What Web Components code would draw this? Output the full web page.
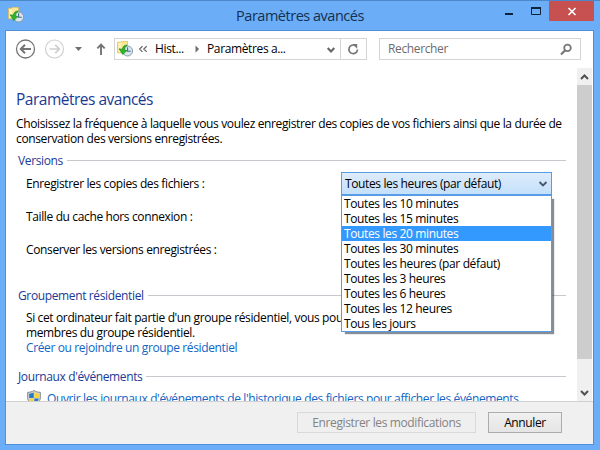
<!DOCTYPE html>
<html lang="fr">
<head>
<meta charset="utf-8">
<title>Paramètres avancés</title>
<style>
	body {
		margin: 0;
		width: 600px;
		height: 450px;
		overflow: hidden;
		font-family: 'Open Sans', 'Noto Sans', sans-serif;
		font-size: 12px;
		line-height: 15px;
		letter-spacing: -0.37px;
		color: #000;
	}
</style>
</head>
<body>
<settings-window></settings-window>

<script>
	class HistoryIcon extends HTMLElement {
		constructor() {
			super();
			this.attachShadow({ mode: "open" });
		}

		connectedCallback() {
			this.shadowRoot.innerHTML = `
				<style>
					:host { display: block; width: 16px; height: 16px; }
					svg { display: block; }
				</style>
				<svg width="16" height="16" viewBox="0 0 16 16">
					<path d="M.5 1.2h3l1-.9h6v11.5h-10z" fill="#fbe796" stroke="#d9b850" stroke-width=".7"/>
					<path d="M1.4 2h2.4v9H1.4z" fill="#fff4b8"/>
					<circle cx="10.6" cy="10" r="5" fill="#d8e6f0" stroke="#8b9ca8" stroke-width="1"/>
					<path d="M10.6 6.3v3.9h3.2" fill="none" stroke="#4d6b85" stroke-width="1.1"/>
					<path d="M10.2 4C7.5 4 5.600 5.500 5.300 8.300L2 7.800 5.700 13.600 10 9.600 7.600 9C7.700 6.800 8.500 5.600 10.200 4z" fill="#2eb52a" stroke="#178a1b" stroke-width=".6"/>
				</svg>
			`;
		}
	}

	class TitleBar extends HTMLElement {
		constructor() {
			super();
			this.attachShadow({ mode: "open" });
		}

		connectedCallback() {
			this.shadowRoot.innerHTML = `
				<style>
					:host {
						display: grid;
						grid-template-columns: 149px 1fr 149px;
						height: 29px;
						color: #15304f;
					}
					history-icon { margin: 6px 0 0 8px; }
					.title {
						text-align: center;
						font-size: 14.5px;
						letter-spacing: -0.48px;
						line-height: 20px;
						padding-top: 5px;
					}
					.controls { display: flex; justify-content: flex-end; padding-right: 6px; }
					.close { width: 45px; height: 20px; background: #c75050; }
					svg { display: block; }
				</style>
				<history-icon></history-icon>
				<div class="title"><slot></slot></div>
				<div class="controls">
					<svg width="50" height="20"><path d="M6 13h8" stroke="#10233c" stroke-width="2"/><path d="M32.500 6.500h9v7h-9z" fill="none" stroke="#10233c"/><path d="M32 7h10" stroke="#10233c" stroke-width="2"/></svg>
					<div class="close">
						<svg width="45" height="20"><path d="M19.500 7l7 7M26.500 7l-7 7" stroke="#fff" stroke-width="1.6"/></svg>
					</div>
				</div>
			`;
		}
	}

	class NavBar extends HTMLElement {
		constructor() {
			super();
			this.attachShadow({ mode: "open" });
		}

		connectedCallback() {
			this.shadowRoot.innerHTML = `
				<style>
					:host { display: flex; height: 37px; padding-top: 7px; box-sizing: border-box; }
					svg { display: block; flex: none; }
					.address, .search {
						display: flex;
						box-sizing: border-box;
						height: 22px;
						border: 1px solid #d5d5d5;
						line-height: 20px;
					}
					.address { width: 253px; }
					.address history-icon { margin: 2px 0 0 2px; flex: none; }
					.first { width: 31px; white-space: nowrap; }
					.second { flex: 1; margin-left: 4px; white-space: nowrap; }
					.refresh { border-left: 1px solid #d5d5d5; }
					.search { width: 202px; margin-left: 12px; padding-left: 8px; color: #6d6d6d; justify-content: space-between; }
				</style>
				<svg width="108" height="22" fill="none">
					<circle cx="19.500" cy="11" r="9" stroke="#747474" stroke-width="1.300"/>
					<path d="M25 11H15.500M19 6.800L14.800 11l4.200 4.200" stroke="#747474" stroke-width="2"/>
					<circle cx="48.500" cy="11" r="9" stroke="#d0d0d0" stroke-width="1.200"/>
					<path d="M43.500 11H53M49.200 6.800L53.400 11l-4.200 4.200" stroke="#cfcfcf" stroke-width="1.700"/>
					<path d="M69 9h7l-3.500 4z" fill="#707070"/>
					<path d="M95 17V7M91.300 10.300L95 6.600l3.700 3.700" stroke="#747474" stroke-width="1.900"/>
				</svg>
				<div class="address">
					<history-icon></history-icon>
					<svg width="22" height="20" fill="none" stroke="#666" stroke-width="1.200"><path d="M9.500 7.200L6.600 10l2.900 2.900M13.700 7.200L10.800 10l2.900 2.900"/></svg>
					<div class="first">Hist...</div>
					<svg width="17" height="20"><path d="M9.500 6.500v7.200l3.600-3.600z" fill="#707070"/></svg>
					<div class="second">Paramètres a...</div>
					<svg width="17" height="20" fill="none"><path d="M4.700 9L8 12.500l3.300-3.500" stroke="#666" stroke-width="2"/></svg>
					<svg class="refresh" width="25" height="20" fill="none"><path d="M14.500 6.700A4.300 4.300 0 1 0 16.500 10.500" stroke="#777" stroke-width="1.700"/><path d="M11.500 5h4.700v4.700z" fill="#777"/></svg>
				</div>
				<div class="search">
					<span>Rechercher</span>
					<svg width="22" height="20" fill="none" stroke="#777"><circle cx="9.500" cy="8.900" r="3.300" stroke-width="1.800"/><path d="M7.200 11.300L3 15.500" stroke-width="2.200"/></svg>
				</div>
			`;
		}
	}

	class SettingsGroup extends HTMLElement {
		constructor() {
			super();
			this.attachShadow({ mode: "open" });
		}

		connectedCallback() {
			this.shadowRoot.innerHTML = `
				<style>
					:host { display: block; }
					.legend { display: flex; align-items: center; margin-left: 12px; width: 548px; color: #1a3a94; white-space: nowrap; }
					.legend::after { content: ""; flex: 1; height: 1px; background: #c5c8cd; margin-left: 4px; }
					.body { padding-left: 20px; }
				</style>
				<div class="legend"><span>${this.getAttribute("label")}</span></div>
				<div class="body"><slot></slot></div>
			`;
		}
	}

	class ComboBox extends HTMLElement {
		constructor() {
			super();
			this.attachShadow({ mode: "open" });
		}

		connectedCallback() {
			const options = this.getAttribute("options").split("|");
			const active = Number(this.getAttribute("active"));
			const items = options.map((text, i) => `<li class="${i === active ? "active" : ""}">${text}</li>`).join("");
			this.shadowRoot.innerHTML = `
				<style>
					:host { display: block; position: relative; width: 211px; height: 23px; }
					.value {
						display: flex;
						justify-content: space-between;
						box-sizing: border-box;
						height: 23px;
						padding-left: 3px;
						border: 1px solid #569de5;
						background: linear-gradient(#deecfb, #c4e0fb);
						line-height: 22px;
					}
					ul {
						position: absolute;
						top: 23px;
						left: 0;
						box-sizing: border-box;
						width: 211px;
						height: 137px;
						margin: 0;
						padding: 0;
						list-style: none;
						background: #fff;
						border: 1px solid #569de5;
						box-shadow: 3px 3px 1px -1px rgba(70, 80, 95, 0.65);
					}
					li { height: 15px; line-height: 16px; padding-left: 2px; white-space: nowrap; }
					.active { background: #3399ff; color: #fff; }
				</style>
				<div class="value">
					<span>${this.getAttribute("value")}</span>
					<svg width="16" height="21" fill="none"><path d="M4.500 9L8 12.500 11.500 9" stroke="#46586e" stroke-width="1.900"/></svg>
				</div>
				<ul>${items}</ul>
			`;
		}
	}

	class ScrollBar extends HTMLElement {
		constructor() {
			super();
			this.attachShadow({ mode: "open" });
		}

		connectedCallback() {
			this.shadowRoot.innerHTML = `
				<style>
					:host { display: grid; grid-template-rows: 17px 274px 1fr 17px; width: 15px; background: #f0f0f0; }
					.thumb { background: #cdcdcd; }
					svg { display: block; }
				</style>
				<svg width="15" height="17" fill="none"><path d="M4 11l3.500-3.500L11 11" stroke="#505050" stroke-width="2"/></svg>
				<div class="thumb"></div>
				<div></div>
				<svg width="15" height="17" fill="none"><path d="M4 7l3.500 3.500L11 7" stroke="#505050" stroke-width="2"/></svg>
			`;
		}
	}

	class PushButton extends HTMLElement {
		constructor() {
			super();
			this.attachShadow({ mode: "open" });
		}

		connectedCallback() {
			this.shadowRoot.innerHTML = `
				<style>
					:host {
						display: block;
						box-sizing: border-box;
						height: 21px;
						border: 1px solid #acacac;
						background: linear-gradient(#f0f0f0, #e5e5e5);
						text-align: center;
						line-height: 20px;
					}
					:host([disabled]) { border-color: #d9d9d9; background: #efefef; color: #838383; }
				</style>
				<slot></slot>
			`;
		}
	}

	class SettingsWindow extends HTMLElement {
		constructor() {
			super();
			this.attachShadow({ mode: "open" });
		}

		connectedCallback() {
			this.shadowRoot.innerHTML = `
				<style>
					:host {
						display: block;
						box-sizing: border-box;
						width: 600px;
						height: 450px;
						background: #6badf6;
						border-top: 1px solid #4c87cb;
					}
					.client {
						display: grid;
						grid-template-rows: 37px 333px 43px;
						box-sizing: border-box;
						width: 589px;
						height: 415px;
						margin-left: 5px;
						border: 1px solid #5090d8;
						background: #fff;
					}
					.middle { display: flex; justify-content: space-between; overflow: hidden; padding-right: 1px; }
					.content { width: 571px; height: 333px; overflow: hidden; }
					h1 { margin: 20px 0 0 10px; font-size: 15.5px; font-weight: 400; line-height: 22px; letter-spacing: -0.5px; color: #1a3a94; }
					.intro { margin: 6px 0 0 10px; white-space: nowrap; }
					.t { display: block; white-space: nowrap; }
					.versions { margin-top: 7px; }
					.row { display: flex; height: 23px; line-height: 24px; margin-bottom: 10px; }
					.row span { width: 315px; }
					.row:first-child { margin-top: 4px; }
					.home { margin-top: 27px; }
					.home .t:first-child { margin-top: 7px; }
					.logs { margin-top: 14px; }
					.link { color: #0f66c4; }
					.open { display: flex; margin-top: 7px; white-space: nowrap; }
					.open svg { margin: -1px 6px 0 1px; }
					footer {
						display: flex;
						justify-content: flex-end;
						gap: 12px;
						box-sizing: border-box;
						padding: 10px 31px 0 0;
						background: #f0f0f0;
						border-top: 1px solid #d0d0d0;
					}
				</style>
				<title-bar>Paramètres avancés</title-bar>
				<div class="client">
					<nav-bar></nav-bar>
					<div class="middle">
						<div class="content">
							<h1><span>Paramètres avancés</span></h1>
							<div class="intro">
								<span class="t">Choisissez la fréquence à laquelle vous voulez enregistrer des copies de vos fichiers ainsi que la durée de</span>
								<span class="t">conservation des versions enregistrées.</span>
							</div>
							<settings-group class="versions" label="Versions">
								<div class="row">
									<span>Enregistrer les copies des fichiers :</span>
									<combo-box
										value="Toutes les heures (par défaut)"
										options="Toutes les 10 minutes|Toutes les 15 minutes|Toutes les 20 minutes|Toutes les 30 minutes|Toutes les heures (par défaut)|Toutes les 3 heures|Toutes les 6 heures|Toutes les 12 heures|Tous les jours"
										active="2"></combo-box>
								</div>
								<div class="row"><span>Taille du cache hors connexion :</span></div>
								<div class="row"><span>Conserver les versions enregistrées :</span></div>
							</settings-group>
							<settings-group class="home" label="Groupement résidentiel">
								<span class="t">Si cet ordinateur fait partie d'un groupe résidentiel, vous pou</span>
								<span class="t">membres du groupe résidentiel.</span>
								<span class="t link">Créer ou rejoindre un groupe résidentiel</span>
							</settings-group>
							<settings-group class="logs" label="Journaux d'événements">
								<div class="open">
									<svg width="14" height="16" viewBox="0 0 14 16">
										<path d="M7 .5C5 2 3 2.300.7 2.300v5.500C.7 11.500 4 14 7 15.500c3-1.500 6.300-4 6.300-7.700V2.300C11 2.300 9 2 7 .5z" fill="#d5d9dc" stroke="#7c858c"/>
										<path d="M6.700 2.300C5 3.300 3.800 3.600 2.200 3.700V8h4.500z" fill="#2878c8"/>
										<path d="M7.300 2.300C9 3.300 10.200 3.600 11.800 3.700V8H7.300z" fill="#f6d53c"/>
										<path d="M6.700 8.500H2.200c.3 2.500 2.300 4 4.500 5.200z" fill="#f6d53c"/>
										<path d="M7.300 8.500h4.500c-.3 2.500-2.300 4-4.500 5.200z" fill="#2878c8"/>
									</svg>
									<span class="link">Ouvrir les journaux d'événements de l'historique des fichiers pour afficher les événements</span>
								</div>
							</settings-group>
						</div>
						<scroll-bar></scroll-bar>
					</div>
					<footer>
						<push-button disabled style="width: 179px">Enregistrer les modifications</push-button>
						<push-button style="width: 74px">Annuler</push-button>
					</footer>
				</div>
			`;
		}
	}

	customElements.define('history-icon', HistoryIcon);
	customElements.define('title-bar', TitleBar);
	customElements.define('nav-bar', NavBar);
	customElements.define('settings-group', SettingsGroup);
	customElements.define('combo-box', ComboBox);
	customElements.define('scroll-bar', ScrollBar);
	customElements.define('push-button', PushButton);
	customElements.define('settings-window', SettingsWindow);
</script>
</body>
</html>
